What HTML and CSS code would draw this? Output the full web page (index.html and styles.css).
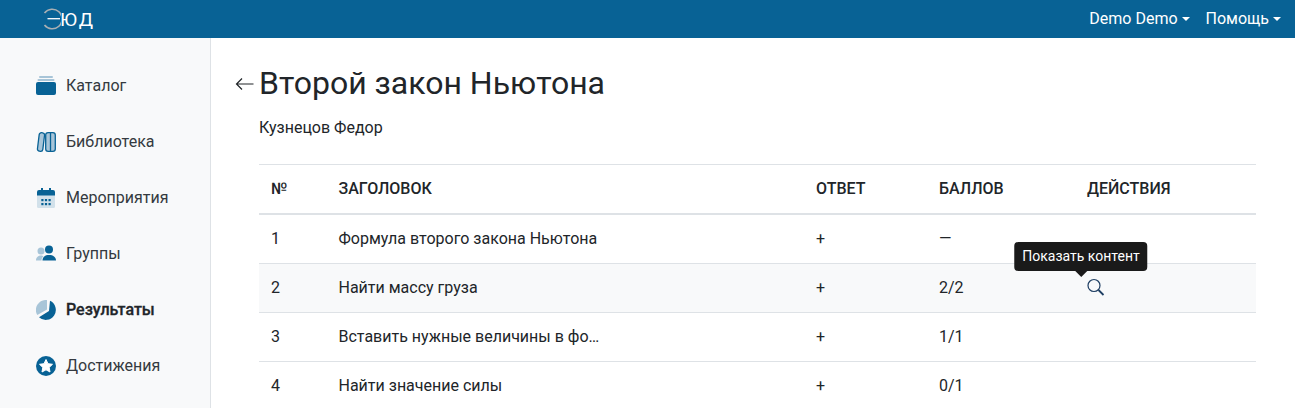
FILE: index.html
```html
<!DOCTYPE html>
<html lang="ru">
<head>
<meta charset="utf-8">
<title>Второй закон Ньютона</title>
<link rel="stylesheet" href="styles.css">
</head>
<body>
<header class="topbar">
  <a class="logo" href="#">
    <svg class="logo-mark" width="18" height="22" viewBox="0 0 18 22"><path d="M1.500 5A9.800 9.800 0 1 1 1.500 17" fill="none" stroke="#a9afb3" stroke-width="1.600"/><path d="M4.500 10.700H17" stroke="#fff" stroke-width="1.300"/></svg>
    <span class="logo-text">ЮД</span>
  </a>
  <nav class="topnav">
    <a class="topnav-item" href="#">Demo Demo<i class="caret"></i></a>
    <a class="topnav-item" href="#">Помощь<i class="caret"></i></a>
  </nav>
</header>
<div class="layout">
  <aside class="sidebar">
    <a class="side-item" href="#">
      <svg class="side-icon" viewBox="0 0 20 20"><rect x="3" y="0" width="14" height="2" rx="1" fill="#a8c5d8"/><rect x="1.500" y="3" width="17" height="2" rx="1" fill="#a8c5d8"/><rect x="0" y="6" width="20" height="13" rx="2" fill="#086295"/></svg>
      <span>Каталог</span>
    </a>
    <a class="side-item" href="#">
      <svg class="side-icon" viewBox="0 0 20 20"><rect x="2.300" y="0.700" width="5.400" height="18.600" rx="2.200" transform="rotate(7 5 10)" fill="#a8c5d8" stroke="#086295" stroke-width="1.300"/><rect x="9.700" y="0.700" width="9.600" height="18.600" rx="2.400" fill="#a8c5d8" stroke="#086295" stroke-width="1.300"/><path d="M14.500 1V19" stroke="#086295" stroke-width="1.300"/></svg>
      <span>Библиотека</span>
    </a>
    <a class="side-item" href="#">
      <svg class="side-icon" viewBox="0 0 20 20"><rect x="1" y="5" width="18" height="15" rx="1.500" fill="#d2e1ea"/><path d="M1 7.500V4A2 2 0 0 1 3 2H5V0H7V2H13V0H15V2H17A2 2 0 0 1 19 4V7.500Z" fill="#086295"/><g fill="#086295"><rect x="5.300" y="11" width="2.200" height="2.200"/><rect x="8.900" y="11" width="2.200" height="2.200"/><rect x="12.500" y="11" width="2.200" height="2.200"/><rect x="5.300" y="15" width="2.200" height="2.200"/><rect x="8.900" y="15" width="2.200" height="2.200"/><rect x="12.500" y="15" width="2.200" height="2.200"/></g></svg>
      <span>Мероприятия</span>
    </a>
    <a class="side-item" href="#">
      <svg class="side-icon" viewBox="0 0 20 20"><circle cx="5" cy="7" r="3.500" fill="#a8c5d8"/><path d="M0 16.500C0 13 2.500 11.500 5 11.500C6 11.500 7 11.800 7.500 12.200C6 13.200 5.500 15 5.500 16.500Z" fill="#a8c5d8"/><circle cx="13" cy="5.500" r="4" fill="#086295"/><path d="M6.500 16.500C6.500 13 9 11 13 11C17 11 20 13 20 16.500Z" fill="#086295"/></svg>
      <span>Группы</span>
    </a>
    <a class="side-item side-item-active" href="#">
      <svg class="side-icon" viewBox="0 0 20 20"><path d="M11 0.050A10 10 0 0 0 1.300 15L11 9.500Z" fill="#a8c5d8"/><path d="M14 0.800A10 10 0 1 1 3 17.200L13 11Z" fill="#086295"/></svg>
      <span>Результаты</span>
    </a>
    <a class="side-item" href="#">
      <svg class="side-icon" viewBox="0 0 20 20"><circle cx="10" cy="10" r="10" fill="#086295"/><path d="M10 3.500L12 7.700L16.500 8.300L13.200 11.400L14 16L10 13.800L6 16L6.800 11.400L3.500 8.300L8 7.700Z" fill="#fff" stroke="#fff" stroke-linejoin="round"/></svg>
      <span>Достижения</span>
    </a>
  </aside>
  <main class="content">
    <div class="title-row">
      <svg class="back" width="20" height="14" viewBox="0 0 20 14"><path d="M18.500 7H1.500M7 1.500L1.500 7L7 12.500" fill="none" stroke="#212529" stroke-width="1.200"/></svg>
      <h1 class="title">Второй закон Ньютона</h1>
    </div>
    <div class="inner">
      <p class="author">Кузнецов Федор</p>
      <table class="results">
        <thead>
          <tr><th class="col-n">№</th><th class="col-t">Заголовок</th><th class="col-a">Ответ</th><th class="col-s">Баллов</th><th>Действия</th></tr>
        </thead>
        <tbody>
          <tr class="first-row"><td>1</td><td>Формула второго закона Ньютона</td><td>+</td><td>—</td><td></td></tr>
          <tr class="hovered"><td>2</td><td>Найти массу груза</td><td>+</td><td>2/2</td>
            <td class="action-cell">
              <span class="action">
                <span class="tooltip">Показать контент</span>
                <svg class="action-icon" width="18" height="18" viewBox="0 0 18 18"><circle cx="7" cy="7.500" r="6" fill="none" stroke="#1f3f63" stroke-width="1.200"/><path d="M11.500 12L16.500 17" stroke="#1f3f63" stroke-width="1.800"/></svg>
              </span>
            </td></tr>
          <tr><td>3</td><td>Вставить нужные величины в фо…</td><td>+</td><td>1/1</td><td></td></tr>
          <tr><td>4</td><td>Найти значение силы</td><td>+</td><td>0/1</td><td></td></tr>
        </tbody>
      </table>
    </div>
  </main>
</div>
</body>
</html>
```
FILE: styles.css
```css
* { box-sizing: border-box; }
html, body { margin: 0; height: 100%; overflow: hidden; }
body { font-family: Roboto, "Liberation Sans", sans-serif; font-size: 16px; color: #212529; background: #fff; line-height: 1.5; }
a { color: inherit; text-decoration: none; }

.topbar { height: 38px; background: #086295; display: flex; align-items: center; justify-content: space-between; padding: 0 14px 0 43px; }
.logo { display: flex; align-items: center; color: #fff; }
.logo-mark { margin-right: -1px; }
.logo-text { font-size: 19px; letter-spacing: 2px; line-height: 1; }
.topnav { display: flex; gap: 16px; color: #fff; font-size: 16px; }
.topnav-item { display: flex; align-items: center; }
.caret { display: inline-block; margin-left: 4px; border-top: 4px solid #fff; border-left: 4px solid transparent; border-right: 4px solid transparent; }

.layout { display: flex; height: 370px; }
.sidebar { width: 211px; flex: none; background: #f8f9fa; border-right: 1px solid #dee2e6; padding-top: 20px; }
.side-item { display: flex; align-items: center; height: 56px; padding-left: 36px; gap: 10px; color: #343a40; }
.side-item-active { font-weight: 500; color: #212529; -webkit-text-stroke: 0.3px #212529; }
.side-icon { width: 20px; height: 20px; flex: none; }

.content { flex: 1; padding: 24px 39px 0 24px; min-width: 0; }
.title-row { display: flex; align-items: center; height: 42px; }
.back { margin-right: 4px; margin-top: 2px; }
.title { margin: 0; font-size: 32px; font-weight: 400; line-height: 42px; color: #212529; }
.inner { margin-left: 24px; }
.author { margin: 12px 0 0; height: 24px; line-height: 24px; }
.results { width: 100%; margin-top: 24px; border-collapse: collapse; table-layout: fixed; }
.results th, .results td { text-align: left; padding: 0 12px; height: 49px; border-top: 1px solid #dee2e6; font-weight: 400; }
.results th { text-transform: uppercase; font-weight: 500; border-bottom: 2px solid #dee2e6; height: 49px; }
.first-row td { height: 50px; }
.col-n { width: 67.500px; }
.col-t { width: 477.500px; }
.col-a { width: 123px; }
.col-s { width: 148px; }
.hovered td { background: #f8f9fa; }
.action { position: relative; display: inline-flex; vertical-align: middle; top: -2px; }
.tooltip { position: absolute; left: 50%; bottom: 100%; margin: 0 0 7px -15px; transform: translateX(-50%); white-space: nowrap; background: #1a1a1a; color: #fff; font-size: 14px; line-height: 21px; padding: 4px 8px; border-radius: 4px; }
.tooltip::after { content: ""; position: absolute; top: 100%; left: 50%; margin-left: -6px; border-top: 6px solid #1a1a1a; border-left: 6px solid transparent; border-right: 6px solid transparent; }
```
